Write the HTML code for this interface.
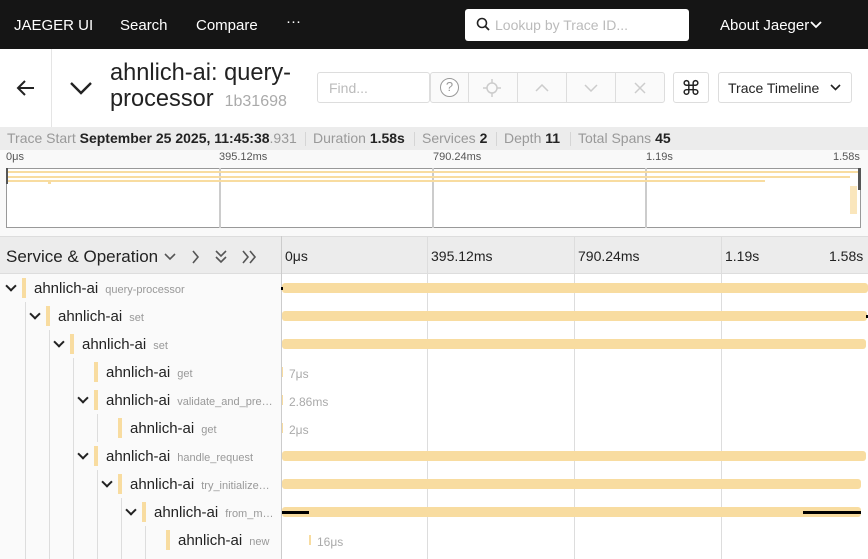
<!DOCTYPE html>
<html><head><meta charset="utf-8"><style>
*{box-sizing:border-box;margin:0;padding:0}
body{width:868px;height:559px;overflow:hidden;font-family:"Liberation Sans",sans-serif;background:#fff;position:relative;color:#222}
.a{position:absolute}
.nav{left:0;top:0;width:868px;height:49px;background:#151515;color:#fff;font-size:15px}
.nav span{position:absolute;top:17px}
.btn{border:1px solid #ddd;border-radius:3px;background:#fff}
.row{position:absolute;left:0;width:868px;height:28px}
.svc{position:absolute;top:6px;font-size:15px;color:#222}
.op{font-size:11px;color:#999;margin-left:7px}
.cb{position:absolute;width:4px;height:20px;top:4px;background:#f8dca0}
.bar{position:absolute;height:10px;top:9px;background:#f8dca0;border-radius:3px}
.chev{position:absolute;top:8px;width:8px;height:8px;border-right:2px solid #222;border-bottom:2px solid #222;transform:rotate(45deg)}
.vl{position:absolute;width:1px;background:#ddd}
.lbl{position:absolute;top:9px;font-size:12px;color:#aaa}
.st{position:absolute;top:3px;white-space:nowrap}
.st b{color:#222}
.sep{position:absolute;top:5px;width:1px;height:14px;background:#d5d5d5}
</style></head><body>
<div class="a nav">
<span style="left:14px">JAEGER UI</span><span style="left:120px">Search</span><span style="left:196px">Compare</span><span style="left:286px;top:13px">···</span>
<div class="a" style="left:465px;top:9px;width:224px;height:32px;background:#fff;border-radius:3px;color:#bbb;font-size:14px;padding:8px 0 0 30px">Lookup by Trace ID...</div>
<svg class="a" style="left:476px;top:17px" width="14" height="14"><circle cx="6" cy="6" r="4.5" fill="none" stroke="#222" stroke-width="1.6"/><path d="M9.5 9.5L13 13" stroke="#222" stroke-width="1.8"/></svg>
<span style="left:720px">About Jaeger</span>
<svg class="a" style="left:810px;top:21px" width="12" height="8"><path d="M1 1l5 5 5-5" fill="none" stroke="#fff" stroke-width="1.8"/></svg>
</div>
<div class="a" style="left:0;top:49px;width:52px;height:79px;border-right:1px solid #e5e5e5"></div>
<svg class="a" style="left:16px;top:79px" width="20" height="18"><path d="M18 9H3M9 2L2 9l7 7" fill="none" stroke="#222" stroke-width="2"/></svg>
<svg class="a" style="left:69px;top:81px" width="24" height="14"><path d="M2 2l10 10 10-10" fill="none" stroke="#222" stroke-width="2.4"/></svg>
<div class="a" style="left:110px;top:60px;font-size:23.6px;line-height:26px;color:#222">ahnlich-ai: query-<br>processor <span style="font-size:16px;color:#aaa">&nbsp;1b31698</span></div>
<div class="a btn" style="left:317px;top:72px;width:113px;height:31px;color:#bbb;font-size:14px;padding:7px 11px">Find...</div>
<div class="a btn" style="left:430px;top:72px;width:235px;height:31px;background:#fafafa"></div>
<div class="a" style="left:468px;top:72px;width:1px;height:31px;background:#ddd"></div>
<div class="a" style="left:517px;top:72px;width:1px;height:31px;background:#ddd"></div>
<div class="a" style="left:566px;top:72px;width:1px;height:31px;background:#ddd"></div>
<div class="a" style="left:615px;top:72px;width:1px;height:31px;background:#ddd"></div>
<div class="a" style="left:440px;top:78px;width:19px;height:19px;border:1.5px solid #999;border-radius:50%;font-size:13px;color:#999;text-align:center;line-height:16px;background:#fff">?</div>
<svg class="a" style="left:482px;top:78px" width="20" height="20"><circle cx="10" cy="10" r="5" fill="none" stroke="#ccc" stroke-width="1.5"/><path d="M10 1v4M10 15v4M1 10h4M15 10h4" stroke="#ccc" stroke-width="1.5"/></svg>
<svg class="a" style="left:535px;top:84px" width="14" height="8"><path d="M1 7l6-6 6 6" fill="none" stroke="#ccc" stroke-width="1.5"/></svg>
<svg class="a" style="left:584px;top:84px" width="14" height="8"><path d="M1 1l6 6 6-6" fill="none" stroke="#ccc" stroke-width="1.5"/></svg>
<svg class="a" style="left:634px;top:82px" width="12" height="12"><path d="M1 1l10 10M11 1L1 11" stroke="#ccc" stroke-width="1.5"/></svg>
<div class="a btn" style="left:673px;top:72px;width:36px;height:31px;font-size:20px;text-align:center;line-height:30px;font-family:'DejaVu Sans',sans-serif">⌘</div>
<div class="a btn" style="left:718px;top:72px;width:134px;height:31px;font-size:14px;padding:7px 9px">Trace Timeline</div>
<svg class="a" style="left:830px;top:84px" width="11" height="7"><path d="M1 1l4.5 4.5L10 1" fill="none" stroke="#222" stroke-width="1.6"/></svg>
<div class="a" style="left:0;top:127px;width:868px;height:23px;background:#ececec;font-size:14px;color:#999">
<div class="st" style="left:7px">Trace Start <b>September 25 2025, 11:45:38</b>.931</div>
<div class="sep" style="left:305px"></div>
<div class="st" style="left:313px">Duration <b>1.58s</b></div>
<div class="sep" style="left:414px"></div>
<div class="st" style="left:422px">Services <b>2</b></div>
<div class="sep" style="left:496px"></div>
<div class="st" style="left:504px">Depth <b>11</b></div>
<div class="sep" style="left:570px"></div>
<div class="st" style="left:578px">Total Spans <b>45</b></div>
</div>
<div class="a" style="left:0;top:150px;width:868px;height:86px;background:#f9f9f9"></div>
<div class="a" style="top:151px;left:6px;font-size:11px;color:#555">0μs</div>
<div class="a" style="top:151px;left:219px;font-size:11px;color:#555">395.12ms</div>
<div class="a" style="top:151px;left:433px;font-size:11px;color:#555">790.24ms</div>
<div class="a" style="top:151px;left:646px;font-size:11px;color:#555">1.19s</div>
<div class="a" style="top:151px;left:833px;font-size:11px;color:#555">1.58s</div>
<div class="a" style="left:6px;top:168px;width:855px;height:60px;background:#fff;border:1px solid #999"></div>
<div class="a" style="left:219px;top:168px;width:2px;height:60px;background:#ccc"></div>
<div class="a" style="left:432px;top:168px;width:2px;height:60px;background:#ccc"></div>
<div class="a" style="left:645px;top:168px;width:2px;height:60px;background:#ccc"></div>
<div class="a" style="left:8px;top:171px;width:850px;height:2px;background:#f8dca0"></div>
<div class="a" style="left:8px;top:176px;width:842px;height:2px;background:#f8dca0"></div>
<div class="a" style="left:8px;top:180px;width:757px;height:2px;background:#f8dca0"></div>
<div class="a" style="left:48px;top:180px;width:3px;height:4px;background:#f8dca0"></div>
<div class="a" style="left:850px;top:186px;width:7px;height:28px;background:#f8dca0;opacity:.7"></div>
<div class="a" style="left:6px;top:168px;width:2px;height:16px;background:#555"></div>
<div class="a" style="left:858px;top:168px;width:3px;height:22px;background:#555"></div>
<div class="a" style="left:0;top:236px;width:868px;height:38px;background:#ececec;border-top:1px solid #ddd;border-bottom:1px solid #ddd"></div>
<div class="a" style="left:6px;top:247px;font-size:17px;color:#222">Service &amp; Operation</div>
<svg class="a" style="left:163px;top:250px" width="100" height="14" fill="none" stroke="#555" stroke-width="1.6"><path d="M2 4l5 5 5-5"/><path d="M30 1l5 6-5 6"/><path d="M53 1l5 5 5-5M53 7l5 5 5-5"/><path d="M80 1l5 6-5 6M87 1l5 6-5 6"/></svg>
<div class="a" style="left:281px;top:236px;width:1px;height:323px;background:#ccc"></div>
<div class="a" style="left:285px;top:248px;font-size:14px">0μs</div>
<div class="a" style="left:431px;top:248px;font-size:14px">395.12ms</div>
<div class="a" style="left:578px;top:248px;font-size:14px">790.24ms</div>
<div class="a" style="left:725px;top:248px;font-size:14px">1.19s</div>
<div class="a" style="left:829px;top:248px;font-size:14px">1.58s</div>
<div class="vl" style="left:427px;top:236px;height:323px"></div>
<div class="vl" style="left:574px;top:236px;height:323px"></div>
<div class="vl" style="left:721px;top:236px;height:323px"></div>
<div class="a" style="left:0;top:274px;width:281px;height:285px;background:#fafafa"></div>
<div class="vl" style="left:25px;top:302px;height:257px"></div>
<div class="vl" style="left:49px;top:330px;height:229px"></div>
<div class="vl" style="left:73px;top:358px;height:201px"></div>
<div class="vl" style="left:97px;top:414px;height:28px"></div>
<div class="vl" style="left:97px;top:470px;height:89px"></div>
<div class="vl" style="left:121px;top:498px;height:61px"></div>
<div class="vl" style="left:145px;top:526px;height:33px"></div>

<div class="row" style="top:274px"><div class="chev" style="left:7px"></div><div class="cb" style="left:22px"></div><div class="svc" style="left:34px">ahnlich-ai<span class="op">query-processor</span></div><div class="bar" style="left:282px;width:586px"></div><div class="a" style="left:281px;top:13px;width:2px;height:3px;background:#000"></div></div>
<div class="row" style="top:302px"><div class="chev" style="left:31px"></div><div class="cb" style="left:46px"></div><div class="svc" style="left:58px">ahnlich-ai<span class="op">set</span></div><div class="bar" style="left:282px;width:585px"></div><div class="a" style="left:866px;top:13px;width:2px;height:3px;background:#000"></div></div>
<div class="row" style="top:330px"><div class="chev" style="left:55px"></div><div class="cb" style="left:70px"></div><div class="svc" style="left:82px">ahnlich-ai<span class="op">set</span></div><div class="bar" style="left:282px;width:584px"></div></div>
<div class="row" style="top:358px"><div class="cb" style="left:94px"></div><div class="svc" style="left:106px">ahnlich-ai<span class="op">get</span></div><div class="a" style="left:282px;top:9px;width:1px;height:10px;background:#f8dca0"></div><div class="lbl" style="left:289px">7μs</div></div>
<div class="row" style="top:386px"><div class="chev" style="left:79px"></div><div class="cb" style="left:94px"></div><div class="svc" style="left:106px">ahnlich-ai<span class="op">validate_and_pre…</span></div><div class="a" style="left:282px;top:9px;width:1px;height:10px;background:#f8dca0"></div><div class="lbl" style="left:289px">2.86ms</div></div>
<div class="row" style="top:414px"><div class="cb" style="left:118px"></div><div class="svc" style="left:130px">ahnlich-ai<span class="op">get</span></div><div class="a" style="left:282px;top:9px;width:1px;height:10px;background:#f8dca0"></div><div class="lbl" style="left:289px">2μs</div></div>
<div class="row" style="top:442px"><div class="chev" style="left:79px"></div><div class="cb" style="left:94px"></div><div class="svc" style="left:106px">ahnlich-ai<span class="op">handle_request</span></div><div class="bar" style="left:282px;width:584px"></div></div>
<div class="row" style="top:470px"><div class="chev" style="left:103px"></div><div class="cb" style="left:118px"></div><div class="svc" style="left:130px">ahnlich-ai<span class="op">try_initialize…</span></div><div class="bar" style="left:282px;width:579px"></div></div>
<div class="row" style="top:498px"><div class="chev" style="left:127px"></div><div class="cb" style="left:142px"></div><div class="svc" style="left:154px">ahnlich-ai<span class="op">from_m…</span></div><div class="bar" style="left:282px;width:579px"></div><div class="a" style="left:282px;top:13px;width:27px;height:3px;background:#000"></div><div class="a" style="left:803px;top:13px;width:58px;height:3px;background:#000"></div></div>
<div class="row" style="top:526px"><div class="cb" style="left:166px"></div><div class="svc" style="left:178px">ahnlich-ai<span class="op">new</span></div><div class="a" style="left:309px;top:9px;width:2px;height:10px;background:#f8dca0"></div><div class="lbl" style="left:317px">16μs</div></div>
</body></html>
